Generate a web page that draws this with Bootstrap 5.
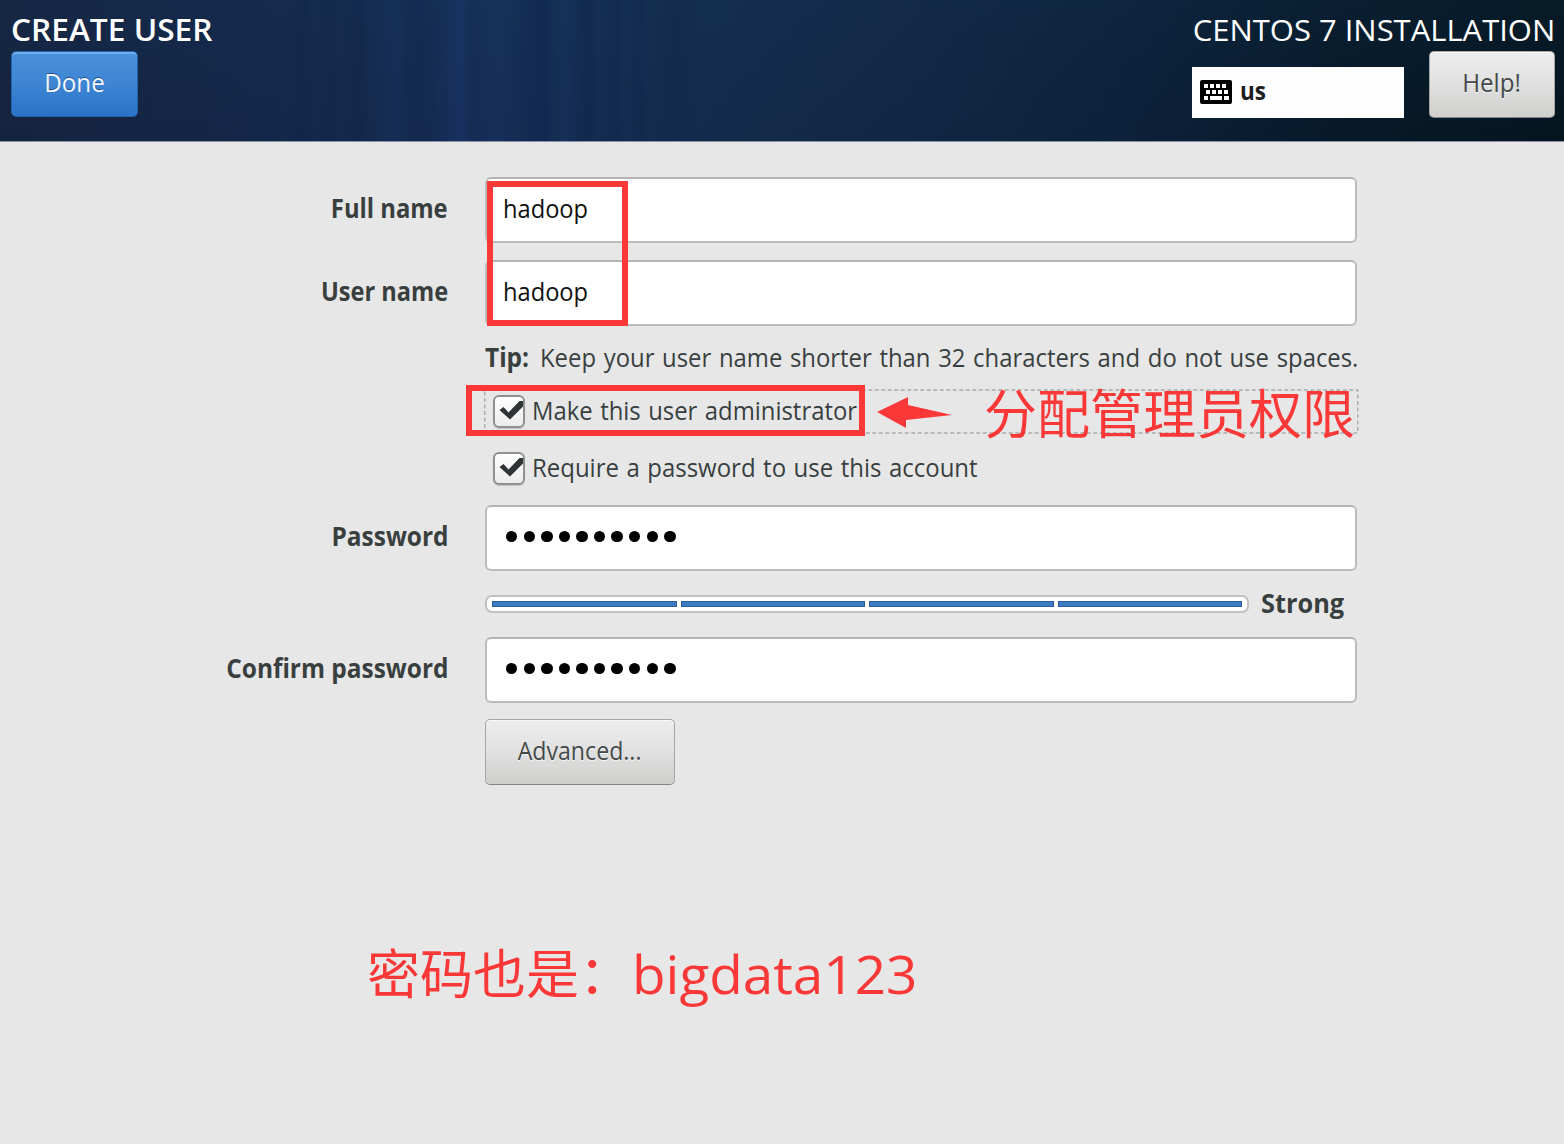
<!DOCTYPE html>
<html lang="en">
<head>
<meta charset="utf-8">
<meta name="viewport" content="width=device-width, initial-scale=1">
<title>Create user</title>
<link rel="stylesheet" href="https://cdn.jsdelivr.net/npm/bootstrap@5.3.0/dist/css/bootstrap.min.css">
<style>
body{background:#e7e7e7;color:#393f3f;font-family:"Open Sans","Noto Sans CJK SC",sans-serif;font-size:26px;line-height:36px;width:1564px;height:1144px;overflow:hidden}
.topbar{height:142px;padding:12px 9px 0 11px;color:#fff;border-bottom:1px solid #8792a6;
 background:
 linear-gradient(90deg,transparent,rgba(8,25,65,.15) 3%,transparent 6%,rgba(8,25,65,.12) 10%,transparent 12%,rgba(8,25,65,.15) 17%,transparent 19%,rgba(28,60,115,.2) 26%,transparent 28%,rgba(8,25,75,.15) 31%,transparent 35%,rgba(32,60,125,.3) 42%,transparent 44%,rgba(32,60,115,.2) 51%,transparent 55%,rgba(8,25,75,.25) 62%,transparent 64%,rgba(32,60,115,.15) 67%,rgba(8,25,65,.25) 73%,transparent 75%,rgba(8,25,65,.2) 79%,transparent 82%,rgba(8,25,65,.2) 85%,transparent 88%,rgba(8,25,65,.15) 94%,transparent) 290px 0/410px 100% no-repeat,
 linear-gradient(180deg,rgba(22,50,85,.25),rgba(20,30,65,.15)),
 linear-gradient(90deg,#15243e 0,#142747 200px,#142b4e 370px,#152e57 480px,#142f52 610px,#132d4c 720px,#122845 880px,#0e253e 1010px,#0a2036 1150px,#051825 1330px,#021319 1564px)}
.heading{font-size:30px;line-height:36px}
.sx{display:inline-block;white-space:nowrap;transform-origin:0 50%;transform:scaleX(var(--k,1))}
.sx-end{transform-origin:100% 50%}
.sx-mid{transform-origin:50% 50%}
.gbtn{height:66px;padding:0 0 5px;border:1px solid #a5a5a2;border-bottom-color:#858585;border-radius:5px;color:#44494a;font-size:26px;line-height:1;
 background:linear-gradient(#ededed,#e2e2e2 45%,#cfcfcd);box-shadow:inset 0 1px 0 #fafafa;text-shadow:0 1px 0 #f4f4f4}
.gbtn-blue{width:127px;color:#f2f8ff;border-color:#2164ad;background:linear-gradient(#4a90d9,#3f87d4 45%,#2a73c7);box-shadow:inset 0 2px 0 #73adeb;text-shadow:0 -1px 0 #24518a}
.top-action{margin-top:3px}
.help{width:126px;height:67px}
.adv{width:190px;margin:16px 0 0 485px}
.kbd-box{width:212px;height:51px;margin-top:19px;margin-right:25px;padding-left:8px;background:#fdfdfd;color:#1d1d1d;font-size:25px}
.kbd-box svg{margin-bottom:1px}
.kbd-box .sx{padding-bottom:5px}
.user-form{padding-top:35px}
.f-label{width:448px;margin-right:37px;padding-bottom:5px;font-weight:700}
.f-input{width:872px;height:66px;padding:0 0 3px 16px;border:2px solid #bcbdbb;border-top-color:#b4b5b3;border-radius:6px;background:#fff;color:#111;font-size:26px;box-shadow:none}
.gap-row{margin-top:17px}
.tipline{height:46px;margin:9px 0 0 485px;padding-bottom:2px}
.chk-row{width:875px;height:46px;margin-left:484px;padding-left:9px}
.chk-row .sx{padding-bottom:4px}
.chk-plain{margin:11px 0 13px 484px}
.focus-line{left:0;top:0}
.chk{width:32px;height:33px;flex:none;border:2px solid #8f9090;border-radius:6px;background:linear-gradient(#fff,#ececec);box-shadow:0 1px 1px #c4c4c4;margin:0 7px 2px 0}
.chk svg{display:block;overflow:visible}
.dots i{width:11.4px;height:11.4px;border-radius:50%;background:#000}
.dots{gap:6.2px;padding-left:19px}
.meter{width:764px;height:18px;padding:4px 5px;gap:4px;border:2px solid #bfc0bf;border-radius:7px;background:#fff}
.meter span{flex:1;height:6px;background:#3d7bc4;border:1px solid #2f6095}
.meter-row{height:66px;margin-left:485px}
.strength{margin-left:12px;padding-bottom:3px;font-weight:700}
.tip-text{margin-left:8px;word-spacing:1.6px}
.ws{word-spacing:1.4px}
.note{color:#fb3838;line-height:60px;white-space:nowrap;font-size:53px}
.mark-box{border:6px solid #fb3838}
.mark-names{left:487px;top:181px;width:141px;height:145px}
.mark-admin{left:466px;top:385px;width:399px;height:51px}
.mark-arrow{left:876px;top:395px}
.note-admin{left:984px;top:384px}
.note-pass{left:367px;top:944px}
</style>
</head>
<body class="position-relative">
<header class="topbar d-flex justify-content-between">
 <div>
  <div class="heading fw-semibold"><span class="sx" style="--k:1.055">CREATE USER</span></div>
  <button class="btn gbtn gbtn-blue top-action d-block"><span class="sx sx-mid" style="--k:.93">Done</span></button>
 </div>
 <div class="d-flex flex-column align-items-end">
  <div class="heading"><span class="sx sx-end" style="--k:1.032">CENTOS 7 INSTALLATION</span></div>
  <div class="d-flex">
   <div class="kbd-box d-flex align-items-center">
    <svg width="32" height="24" viewBox="0 0 32 24"><rect width="32" height="24" rx="2" fill="#000"/><path fill="#fff" d="M4 4h4v4H4zM10 4h4v4h-4zM16 4h4v4h-4zM22 4h4v4h-4zM6 10h4v4H6zM12 10h4v4h-4zM18 10h4v4h-4zM24 10h4v4h-4zM4 16h4v4H4zM10 16h12v4H10zM24 16h5v4h-5z"/></svg>
    <span class="sx fw-bold ms-2" style="--k:.9">us</span>
   </div>
   <button class="btn gbtn help top-action"><span class="sx sx-mid" style="--k:.93">Help!</span></button>
  </div>
 </div>
</header>
<main class="user-form">
 <div class="d-flex align-items-center">
  <label class="f-label text-end"><span class="sx sx-end" style="--k:.915">Full name</span></label>
  <div class="form-control f-input d-flex align-items-center"><span class="sx" style="--k:.91">hadoop</span></div>
 </div>
 <div class="d-flex align-items-center gap-row">
  <label class="f-label text-end"><span class="sx sx-end" style="--k:.907">User name</span></label>
  <div class="form-control f-input d-flex align-items-center"><span class="sx" style="--k:.91">hadoop</span></div>
 </div>
 <div class="tipline d-flex align-items-center"><span class="sx fw-bold" style="--k:.94">Tip:</span><span class="sx tip-text" style="--k:.918">Keep your user name shorter than 32 characters and do not use spaces.</span></div>
 <div class="chk-row mt-2 d-flex align-items-center position-relative">
  <svg class="focus-line position-absolute" width="875" height="46"><rect x=".75" y="1" width="873" height="43" fill="none" stroke="#a9abab" stroke-width="1.4" stroke-dasharray="4 2.5"/></svg>
  <span class="chk"><svg width="28" height="29" viewBox="0 0 28 29"><path fill="#2e3436" d="M4.500 13l4-3 5 5.500L24.500 4H28v5.500L15 22.500z"/></svg></span>
  <span class="sx ws" style="--k:.918">Make this user administrator</span>
 </div>
 <div class="chk-row chk-plain d-flex align-items-center">
  <span class="chk"><svg width="28" height="29" viewBox="0 0 28 29"><path fill="#2e3436" d="M4.500 13l4-3 5 5.500L24.500 4H28v5.500L15 22.500z"/></svg></span>
  <span class="sx ws" style="--k:.922">Require a password to use this account</span>
 </div>
 <div class="d-flex align-items-center">
  <label class="f-label text-end"><span class="sx sx-end" style="--k:.94">Password</span></label>
  <div class="form-control f-input dots d-flex align-items-center"><i></i><i></i><i></i><i></i><i></i><i></i><i></i><i></i><i></i><i></i></div>
 </div>
 <div class="meter-row d-flex align-items-center">
  <div class="meter d-flex"><span></span><span></span><span></span><span></span></div>
  <span class="sx strength" style="--k:.975">Strong</span>
 </div>
 <div class="d-flex align-items-center">
  <label class="f-label text-end"><span class="sx sx-end" style="--k:.94">Confirm password</span></label>
  <div class="form-control f-input dots d-flex align-items-center"><i></i><i></i><i></i><i></i><i></i><i></i><i></i><i></i><i></i><i></i></div>
 </div>
 <button class="btn gbtn adv"><span class="sx sx-mid" style="--k:.89">Advanced...</span></button>
</main>
<div class="mark-box mark-names position-absolute"></div>
<div class="mark-box mark-admin position-absolute"></div>
<svg class="mark-arrow position-absolute" width="80" height="36"><path fill="#fb3838" d="M1 17L32 2v8L76 20 30 25v8z"/></svg>
<div class="note note-admin position-absolute">分配管理员权限</div>
<div class="note note-pass position-absolute">密码也是：<span class="sx" style="--k:1.035">bigdata123</span></div>
<script src="https://cdn.jsdelivr.net/npm/bootstrap@5.3.0/dist/js/bootstrap.bundle.min.js"></script>
</body>
</html>
